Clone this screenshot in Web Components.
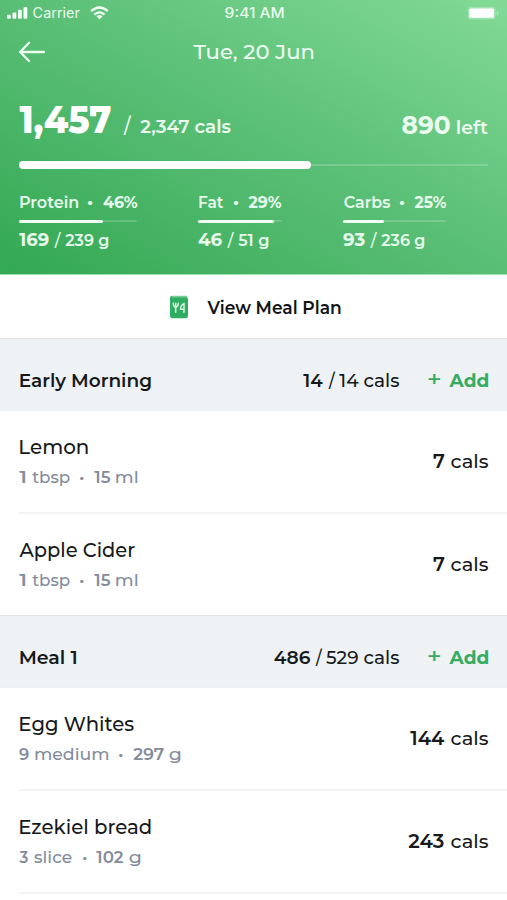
<!DOCTYPE html>
<html lang="en">
<head>
<meta charset="utf-8">
<title>Meal diary</title>
<style>
html, body { margin: 0; background: #fff; }
body { font-family: Montserrat, Inter, "Open Sans", sans-serif; color: #17191b; width: 507px; height: 900px; overflow: hidden; }
</style>
</head>
<body>
<diary-screen></diary-screen>
<script>
const define = (name, cls) => customElements.define(name, cls);
const shadow = (el, html) => { el.attachShadow({ mode: 'open' }).innerHTML = html; };
const ctx = document.createElement('canvas').getContext('2d');

/* A run of text whose ink fills the width in its `w` attribute; `y` nudges it vertically. */
define('t-run', class extends HTMLElement {
  connectedCallback() {
    if (this.shadowRoot) return;
    const a = n => this.getAttribute(n);
    shadow(this, `<style>
      :host { display: block; flex: none; width: ${a('w')}px; margin-left: ${a('g') || 0}px;
        font-size: ${a('s')}px; font-weight: ${a('b') || 500}; line-height: 24px; white-space: pre; }
      span { display: inline-block; transform-origin: 0 50%; }
    </style><span><slot></slot></span>`);
    const cs = getComputedStyle(this);
    ctx.font = `${cs.fontWeight} ${a('s') * 10}px ${cs.fontFamily}`;
    const m = ctx.measureText(this.textContent);
    const left = m.actualBoundingBoxLeft / 10, right = m.actualBoundingBoxRight / 10;
    const trim = a('w') > 5 ? 0.8 : 0;
    const k = (a('w') - trim) / (right + left);
    this.shadowRoot.querySelector('span').style.transform =
      `translate(${(left * k + trim / 2).toFixed(2)}px, ${a('y') || 0}px) scaleX(${k.toFixed(4)})`;
  }
});

/* Horizontal line of text runs sharing a baseline. */
define('t-line', class extends HTMLElement {
  connectedCallback() {
    if (this.shadowRoot) return;
    shadow(this, `<style>:host { display: flex; align-items: baseline; height: 24px; }</style><slot></slot>`);
  }
});

define('status-bar', class extends HTMLElement {
  connectedCallback() {
    shadow(this, `<style>
      :host { display: grid; grid-template-columns: 1fr auto 1fr; align-items: center; height: 26px; padding: 0 8px 0 7px; color: #e9fbee; font-family: Inter, sans-serif; }
      .l { display: flex; align-items: center; }
      .r { justify-self: end; display: block; }
      svg { display: block; }
      .wifi { margin-left: 10px; }
      .time { margin-left: 2px; }
    </style>
    <div class="l">
      <svg width="21" height="14" viewBox="0 0 21 14" fill="#f4fff7"><rect x="0" y="8.7" width="3.8" height="4.1" rx="1"/><rect x="5.5" y="6.4" width="3.8" height="6.4" rx="1"/><rect x="11" y="3.8" width="3.8" height="9" rx="1"/><rect x="16.500" y="1" width="3.800" height="11.800" rx="1"/></svg>
      <t-run s="14.6" b="400" w="47" g="5">Carrier</t-run>
      <svg class="wifi" width="19" height="14" viewBox="0 0 19 14" fill="none" stroke="#f4fff7" stroke-width="2.300"><path d="M1.200 5.200Q9.500-2.200 17.800 5.200M4.400 8.600Q9.500 4.100 14.600 8.600"/><path d="M6.500 10.300Q9.500 7.800 12.500 10.300L9.500 13.500Z" fill="#f4fff7" stroke="none"/></svg>
    </div>
    <t-run class="time" s="13.800" b="550" w="59">9:41 AM</t-run>
    <svg class="r" width="32" height="14" viewBox="0 0 32 14"><rect x=".7" y=".8" width="28" height="12.600" rx="3" fill="#fff" opacity=".25"/><rect x="2.300" y="2.500" width="24.700" height="9.300" rx="1.500" fill="#fff"/><path d="M29.600 5v4.400q2-.8 2-2.200t-2-2.200z" fill="#fff" opacity=".35"/></svg>`);
  }
});

define('progress-bar', class extends HTMLElement {
  connectedCallback() {
    const a = n => this.getAttribute(n);
    shadow(this, `<style>
      :host { display: grid; align-items: center; width: ${a('total')}px; height: ${a('h')}px; }
      i { grid-area: 1 / 1; }
      .track { height: ${a('track')}px; background: rgba(255,255,255,.18); border-radius: 2px; }
      .fill { width: ${a('value')}px; height: ${a('h')}px; border-radius: 4px; background: ${a('color') || '#fff'}; }
    </style><i class="track"></i><i class="fill"></i>`);
  }
});

/* One macro nutrient. Every text is given as "text|gap|width". */
define('macro-stat', class extends HTMLElement {
  connectedCallback() {
    const r = (n, s, b, y = 0) => { const [t, g, w] = this.getAttribute(n).split('|'); return `<t-run s="${s}" b="${b}" g="${g}" w="${w}" y="${y}">${t}</t-run>`; };
    shadow(this, `<style>
      :host { display: block; color: #e6fbec; width: ${this.getAttribute('total')}px; }
      progress-bar { margin: 6px 0 5px; }
    </style>
    <t-line>${r('name', 16, 600)}${r('dot', 19, 600, -.2)}${r('pct', 16, 700)}</t-line>
    <progress-bar total="${this.getAttribute('total')}" value="${this.getAttribute('value')}" h="3" track="2.500" color="#f0fdf3"></progress-bar>
    <t-line>${r('now', 17.800, 700)}${r('sep', 17.500, 500)}${r('goal', 16.500, 600)}</t-line>`);
  }
});

define('day-header', class extends HTMLElement {
  connectedCallback() {
    shadow(this, `<style>
      :host { display: block; box-sizing: border-box; height: 275px; color: #edfcf1;
        background: linear-gradient(to top right, #33a853 0%, #59be75 50%, #82da96 100%); border-bottom: 1px solid #a5dfb5; }
      .nav { display: grid; grid-template-columns: 1fr auto 1fr; align-items: center; height: 52px; padding: 0 19px; }
      .sum { display: flex; justify-content: space-between; padding: 30px 19px 0; box-sizing: border-box; height: 80px; }
      .big { color: #fff; }
      .left { margin-top: 5px; }
      .bar { padding: 0 19px; margin-top: 3px; }
      .macros { display: flex; padding: 0 19px; margin-top: 21px; }
      svg { display: block; }
    </style>
    <status-bar></status-bar>
    <div class="nav">
      <svg width="27" height="22" viewBox="0 0 27 22" fill="none" stroke="#edfcf1" stroke-width="2.300" stroke-linecap="round" stroke-linejoin="round"><path d="M1.200 11H25M10 1.800L1.200 11L10 20"/></svg>
      <t-run s="20.500" b="550" w="120.500">Tue, 20 Jun</t-run>
    </div>
    <div class="sum">
      <t-line><t-run class="big" s="37" b="800" w="92">1,457</t-run><t-run s="20" b="500" g="11.500" w="8.500">/</t-run><t-run s="18.500" b="600" g="8.500" w="91">2,347 cals</t-run></t-line>
      <t-line class="left"><t-run s="25" b="700" w="48">890</t-run><t-run s="18.500" b="600" g="7.500" w="31">left</t-run></t-line>
    </div>
    <div class="bar"><progress-bar total="469" value="292" h="7.500" track="2"></progress-bar></div>
    <div class="macros">
      <macro-stat name="Protein|.7|58.500" dot="•|10.3|4.300" pct="46%|10.200|34.500" now="169|0|30" sep="/|5|7.500" goal="239 g|3.5|43.500" total="118" value="84"></macro-stat>
      <macro-stat style="margin-left:61px" name="Fat|1|24.500" dot="•|10.800|4.300" pct="29%|9.700|33.500" now="46|0.3|24" sep="/|5|7.500" goal="51 g|3.5|30.500" total="84" value="76"></macro-stat>
      <macro-stat style="margin-left:61px" name="Carbs|.5|46.500" dot="•|9.800|4.300" pct="25%|9.800|32.500" now="93|0.3|22" sep="/|5|7.500" goal="236 g|3.5|43.500" total="103" value="41"></macro-stat>
    </div>`);
  }
});

define('plan-link', class extends HTMLElement {
  connectedCallback() {
    shadow(this, `<style>
      :host { display: flex; justify-content: center; align-items: center; height: 63px; padding-left: 3px; gap: 18px; color: #121416; }
      svg { display: block; }
    </style>
    <svg width="20" height="24" viewBox="0 0 20 24"><path d="M3.500.7H17.500L19 2.500H2z" fill="#78cd94"/><path d="M1 3Q1 .8 3.500 .8L2.700 2.300H17Q19 2.300 19 4.500V20.500Q19 23.300 16.500 23.300H3.500Q1 23.300 1 20.500Z" fill="#2fae61"/><path d="M4.300 8.300Q4.300 12 6.700 12Q9.200 12 9.200 8.300M6.700 8.300V17.300M15 17.300V8.300Q11.700 10 11.500 14.300H15" fill="none" stroke="#d8f7e0" stroke-width="1.500" stroke-linecap="round" stroke-linejoin="round"/></svg>
    <t-run s="17.800" b="600" w="134" y=".6">View Meal Plan</t-run>`);
  }
});

define('meal-section', class extends HTMLElement {
  connectedCallback() {
    const p = n => this.getAttribute(n).split('|');
    const [t, tw] = p('name'), [n, nw] = p('now'), [g, gw] = p('goal');
    shadow(this, `<style>
      :host { display: block; }
      header { box-sizing: border-box; height: 73px; display: flex; align-items: center; padding: 13px 19px 0 20px; background: #eef2f5; border-top: 1px solid #e1e4e6; border-bottom: 1px solid #edeff0; }
      .c { margin-left: auto; }
      .add { color: #36ab62; margin: -2px 0 0 28px; }
    </style>
    <header>
      <t-run s="18.300" b="600" w="${tw}">${t}</t-run>
      <t-line class="c"><t-run s="18.300" b="600" w="${nw}">${n}</t-run><t-run s="19" b="500" g="4.500" w="7.500">/</t-run><t-run s="18.300" b="500" g="4" w="${gw}">${g}</t-run></t-line>
      <t-line class="add"><t-run s="22" b="500" w="12.500">+</t-run><t-run s="18.300" b="700" g="8.300" w="39.500">Add</t-run></t-line>
    </header><slot></slot>`);
  }
});

define('food-row', class extends HTMLElement {
  connectedCallback() {
    const p = n => this.getAttribute(n).split('|');
    const [t, tw] = p('name'), q = p('qty'), [c, cw] = p('cals');
    shadow(this, `<style>
      :host { display: block; margin-left: 19px; }
      .row { display: flex; justify-content: space-between; align-items: center; height: 101px; padding-right: 19px; }
      .row > div { padding-top: 1px; }
      .sub { color: #838c9c; margin-top: 6px; }
      .cals { margin-top: -2px; }
      hr { margin: 0; border: 0; height: 2px; background: #f2f3f4; }
      :host([last]) hr { display: none; }
    </style>
    <div class="row"><div>
      <t-line><t-run s="20" b="500" g="${t[0] === 'A' ? 0 : 1}" w="${tw}">${t}</t-run></t-line>
      <t-line class="sub"><t-run s="17.300" b="600" w="${q[1]}">${q[0]}</t-run><t-run s="17.300" b="500" g="6" w="${q[3]}">${q[2]}</t-run><t-run s="16" b="500" g="10.500" w="3.600" y="-.2">•</t-run><t-run s="17.300" b="600" g="10" w="${q[5]}">${q[4]}</t-run><t-run s="17.300" b="500" g="5.500" w="${q[7]}">${q[6]}</t-run></t-line>
    </div>
    <t-line class="cals"><t-run s="19.300" b="600" w="${cw}">${c}</t-run><t-run s="19.300" b="500" g="6.200" w="37.500">cals</t-run></t-line></div><hr>`);
  }
});

define('diary-screen', class extends HTMLElement {
  connectedCallback() {
    shadow(this, `<style>:host { display: block; }</style>
    <day-header></day-header>
    <plan-link></plan-link>
    <meal-section name="Early Morning|131" now="14|20" goal="14 cals|60.500">
      <food-row name="Lemon|68" qty="1|6.500|tbsp|38|15|16.500|ml|21.500" cals="7|11.500"></food-row>
      <food-row last name="Apple Cider|116" qty="1|6.500|tbsp|38|15|16.500|ml|21.500" cals="7|11.500"></food-row>
    </meal-section>
    <meal-section name="Meal 1|56.500" now="486|36.500" goal="529 cals|73.500">
      <food-row name="Egg Whites|114" qty="9|10|medium|73.500|297|31|g|11.500" cals="144|34.500"></food-row>
      <food-row name="Ezekiel bread|131" qty="3|9|slice|38|102|27.500|g|11.500" cals="243|36"></food-row>
    </meal-section>`);
  }
});
</script>
</body>
</html>
